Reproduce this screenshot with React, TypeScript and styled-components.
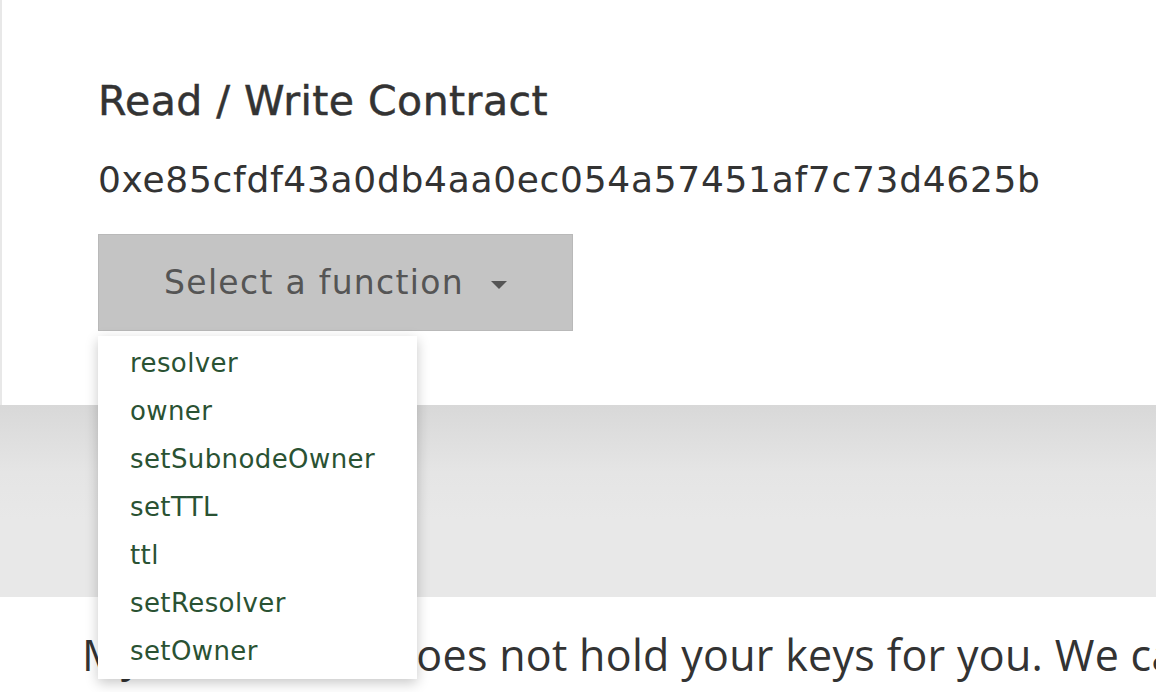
import React from "react";
import styled, { createGlobalStyle } from "styled-components";

const GlobalStyle = createGlobalStyle`
  html, body { margin: 0; padding: 0; background: #e8e8e8; }
  body { width: 1156px; height: 692px; overflow: hidden; font-family: "DejaVu Sans", sans-serif; }
  * { box-sizing: border-box; }
`;

const Page = styled.div`
  display: flex;
  flex-direction: column;
  width: 1156px;
  height: 692px;
  overflow: hidden;
`;

const TopPanel = styled.section`
  background: #ffffff;
  margin-left: 2px;
  height: 405px;
  padding: 77px 0 0 96px;
  display: flex;
  flex-direction: column;
  align-items: flex-start;
`;

const Title = styled.h1`
  margin: 0;
  font-family: "DejaVu Sans", sans-serif;
  font-weight: 400;
  font-size: 41px;
  line-height: 48px;
  letter-spacing: 0.45px;
  color: #333333;
  -webkit-text-stroke: 0.5px #333333;
  white-space: nowrap;
`;

const Address = styled.div`
  margin-top: 33px;
  font-family: "DejaVu Sans", sans-serif;
  font-size: 36px;
  line-height: 44px;
  letter-spacing: 0.7px;
  color: #333333;
  white-space: nowrap;
`;

const SelectWrap = styled.div`
  position: relative;
  margin-top: 32px;
`;

const SelectButton = styled.button`
  width: 475px;
  height: 97px;
  background: #c4c4c4;
  border: 1px solid #b9b9b9;
  border-radius: 0;
  display: flex;
  align-items: center;
  justify-content: center;
  gap: 27px;
  padding: 0;
  font-family: "DejaVu Sans", sans-serif;
  font-size: 33px;
  letter-spacing: 1.3px;
  color: #555555;
  cursor: pointer;
`;

const Caret = styled.span`
  display: inline-block;
  width: 0;
  height: 0;
  border-left: 8px solid transparent;
  border-right: 8px solid transparent;
  border-top: 8px solid #555555;
  margin-top: 4px;
`;

const Menu = styled.ul`
  position: absolute;
  top: 102px;
  left: 0;
  width: 319px;
  margin: 0;
  padding: 3px 0 4px;
  list-style: none;
  background: #ffffff;
  box-shadow: 0 4px 12px rgba(0, 0, 0, 0.22);
  z-index: 10;
`;

const MenuItem = styled.li`
  padding-left: 32px;
  font-family: "DejaVu Sans", sans-serif;
  font-size: 26px;
  line-height: 48px;
  letter-spacing: 0.4px;
  color: #2a5233;
  white-space: nowrap;
`;

const GrayBand = styled.div`
  height: 192px;
  background: linear-gradient(#d8d8d8 0%, #e5e5e5 35%, #e8e8e8 60%);
`;

const Footer = styled.footer`
  flex: 1;
  background: #ffffff;
  padding: 28px 0 0 82px;
`;

const FooterText = styled.p`
  margin: 0;
  font-family: "Open Sans", sans-serif;
  font-size: 43px;
  letter-spacing: 0.3px;
  color: #333333;
  white-space: nowrap;
`;

const functions = [
  "resolver",
  "owner",
  "setSubnodeOwner",
  "setTTL",
  "ttl",
  "setResolver",
  "setOwner",
];

export default function App() {
  return (
    <>
      <GlobalStyle />
      <Page>
        <TopPanel>
          <Title>Read / Write Contract</Title>
          <Address>0xe85cfdf43a0db4aa0ec054a57451af7c73d4625b</Address>
          <SelectWrap>
            <SelectButton>
              <span>Select a function</span>
              <Caret />
            </SelectButton>
            <Menu>
              {functions.map((f) => (
                <MenuItem key={f}>{f}</MenuItem>
              ))}
            </Menu>
          </SelectWrap>
        </TopPanel>
        <GrayBand />
        <Footer>
          <FooterText>
            MyEtherWallet does not hold your keys for you. We cannot access accounts, recover keys, reset passwords, nor reverse transactions.
          </FooterText>
        </Footer>
      </Page>
    </>
  );
}
